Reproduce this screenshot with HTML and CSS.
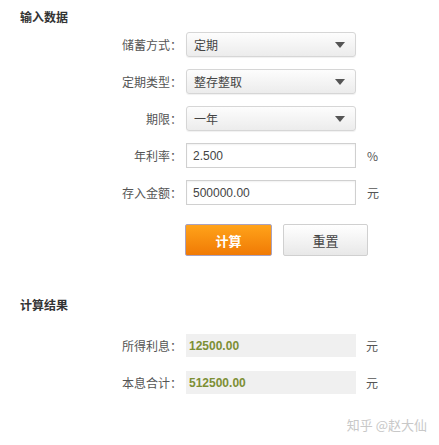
FILE: index.html
```html
<!DOCTYPE html>
<html lang="zh">
<head>
<meta charset="utf-8">
<link rel="stylesheet" href="styles.css">
</head>
<body>
<div class="page">
  <div class="section-title first">输入数据</div>
  <div class="form form-input">
    <div class="row">
      <span class="label">储蓄方式：</span>
      <div class="select"><span>定期</span><i class="arrow"></i></div>
    </div>
    <div class="row">
      <span class="label">定期类型：</span>
      <div class="select"><span>整存整取</span><i class="arrow"></i></div>
    </div>
    <div class="row">
      <span class="label">期限：</span>
      <div class="select"><span>一年</span><i class="arrow"></i></div>
    </div>
    <div class="row">
      <span class="label">年利率：</span>
      <div class="input">2.500</div>
      <span class="unit">%</span>
    </div>
    <div class="row">
      <span class="label">存入金额：</span>
      <div class="input">500000.00</div>
      <span class="unit">元</span>
    </div>
    <div class="buttons">
      <button class="btn btn-primary">计算</button>
      <button class="btn btn-default">重置</button>
    </div>
  </div>
  <div class="section-title second">计算结果</div>
  <div class="form form-result">
    <div class="row result-row">
      <span class="label">所得利息：</span>
      <div class="result">12500.00</div>
      <span class="unit">元</span>
    </div>
    <div class="row result-row">
      <span class="label">本息合计：</span>
      <div class="result">512500.00</div>
      <span class="unit">元</span>
    </div>
  </div>
  <div class="watermark">知乎 @赵大仙</div>
</div>
</body>
</html>
```

FILE: styles.css
```css
* { box-sizing: border-box; }
html, body { margin: 0; padding: 0; background: #fff; }
body {
  font-family: "Noto Sans CJK SC", "Noto Sans", "Liberation Sans", sans-serif;
  font-size: 12px;
  color: #555;
}
.page {
  width: 439px;
  height: 445px;
  padding-left: 20px;
}
.section-title {
  font-weight: bold;
  color: #333;
  font-size: 12px;
  line-height: 16px;
}
.section-title.first { padding-top: 9px; }
.section-title.second { margin-top: 41px; }
.form { display: flex; flex-direction: column; }
.form-input { margin-top: 7px; }
.form-result { margin-top: 21px; }
.row {
  display: flex;
  align-items: center;
  height: 25px;
  margin-bottom: 12px;
}
.label {
  width: 162px;
  text-align: right;
  color: #555;
  flex: none;
}
.select, .input, .result {
  margin-left: 4px;
  width: 170px;
  height: 25px;
  flex: none;
  display: flex;
  align-items: center;
  padding-left: 7px;
}
.select {
  border: 1px solid #d6d6d6;
  border-radius: 3px;
  background: linear-gradient(#fdfdfd, #ececec);
  box-shadow: 0 1px 1px rgba(0,0,0,0.06);
  justify-content: space-between;
  padding-right: 10px;
  color: #444;
}
.arrow {
  width: 0; height: 0;
  border-left: 5px solid transparent;
  border-right: 5px solid transparent;
  border-top: 6px solid #555;
}
.input {
  border: 1px solid #d0d0d0;
  background: #fff;
  box-shadow: inset 0 1px 2px rgba(0,0,0,0.06);
  padding-left: 6px;
  color: #444;
  font-family: "Liberation Sans", "Noto Sans CJK SC", sans-serif;
  font-size: 12px;
}
.unit {
  margin-left: 11px;
  color: #555;
}
.buttons {
  display: flex;
  gap: 11px;
  margin-left: 165px;
  margin-top: 7px;
}
.btn {
  width: 87px;
  height: 32px;
  font-family: inherit;
  font-size: 13px;
  border-radius: 2px;
  padding: 0;
  cursor: pointer;
}
.btn-primary {
  background: linear-gradient(#ffa31a, #f07a05);
  border: 1px solid #a9a2c0;
  color: #fff;
  font-weight: bold;
}
.btn-default {
  width: 85px;
  background: linear-gradient(#ffffff, #e8e8e8);
  border: 1px solid #d0d0d0;
  color: #444;
}
.result-row { height: 23px; margin-bottom: 14px; }
.result {
  height: 23px;
  background: #f0f0f0;
  font-family: "Liberation Sans", sans-serif;
  font-weight: bold;
  font-size: 12px;
  color: #7d8f35;
  padding-left: 3px;
}
.result-row .unit { margin-left: 10px; }
.watermark {
  text-align: right;
  padding-right: 12px;
  margin-top: 7px;
  color: #c8c8c8;
  font-size: 13px;
}
```
